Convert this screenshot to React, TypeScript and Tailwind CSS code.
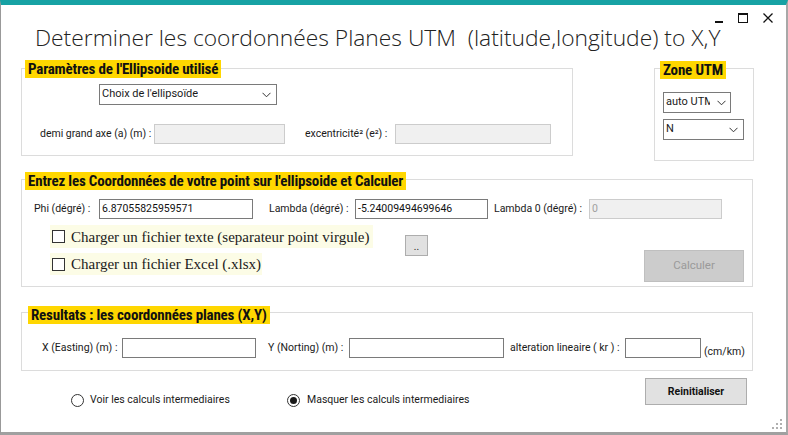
import React from "react";

const labelFont = "font-['Roboto_Condensed','Liberation_Sans',sans-serif] font-bold text-[15px] leading-[18px] tracking-[-0.18px] text-[#111]";

function GroupLabel({ text, className }: { text: string; className: string }) {
  return (
    <div className={`absolute h-[18px] bg-[#ffd700] px-[3px] whitespace-nowrap ${labelFont} ${className}`}>
      {text}
    </div>
  );
}

function Chevron() {
  return (
    <svg width="9" height="6" viewBox="0 0 9 6" className="shrink-0">
      <polyline points="0.5,0.8 4.5,4.8 8.5,0.8" fill="none" stroke="#333" strokeWidth="1" />
    </svg>
  );
}

function Combo({ text, w, textW, chevronPr = 5 }: { text: string; w: string; textW?: string; chevronPr?: number }) {
  return (
    <div className={`${w} h-[21px] shrink-0 border border-[#7a7a7a] bg-white flex items-center pl-[2px]`} style={{ paddingRight: chevronPr }}>
      <span className={`overflow-hidden whitespace-nowrap ${textW ?? ""} text-[11px]`}>{text}</span>
      <span className="flex-1" />
      <Chevron />
    </div>
  );
}

function Input({ w, value = "", disabled = false }: { w: string; value?: string; disabled?: boolean }) {
  return (
    <div
      className={`${w} h-[20px] shrink-0 border flex items-center pl-[2px] whitespace-nowrap overflow-hidden ${
        disabled ? "bg-[#f0f0f0] border-[#cccccc] text-[#a0a0a0]" : "bg-white border-[#7a7a7a] text-[#111]"
      }`}
    >
      {value}
    </div>
  );
}

function CheckRow({ text, w, h }: { text: string; w: string; h: string }) {
  return (
    <div className={`${w} ${h} bg-[#fcfce6] flex items-center pl-[2px]`}>
      <div className="w-[13px] h-[13px] border border-[#333] bg-white shrink-0" />
      <span className="ml-[6px] font-['Liberation_Serif',serif] text-[15px] leading-[18px] text-[#1a1a1a] whitespace-nowrap">
        {text}
      </span>
    </div>
  );
}

function Radio({ checked }: { checked: boolean }) {
  return (
    <div className="w-[13px] h-[13px] rounded-full border border-[#333] bg-white flex items-center justify-center shrink-0">
      {checked && <div className="w-[7px] h-[7px] rounded-full bg-[#1a1a1a]" />}
    </div>
  );
}

export default function App() {
  return (
    <div className="relative w-[788px] h-[435px] overflow-hidden bg-white border-t-[5px] border-t-[#17a2a4] border-l border-l-[#999999] border-r-2 border-r-[#a8a8a8] border-b-[3px] border-b-[#a0a0a0] font-['Roboto',sans-serif] text-[10.5px] text-[#1a1a1a]">
      {/* window controls */}
      <div className="h-[19px] flex justify-end items-start pt-[8px] pr-[13px]">
        <div className="w-[8px] h-[10px] flex items-end">
          <div className="w-[8px] h-[2px] bg-[#111]" />
        </div>
        <div className="ml-[15px] w-[10px] h-[10px] border border-[#111] border-t-2" />
        <svg className="ml-[15px]" width="10" height="10" viewBox="0 0 10 10">
          <path d="M0.5 0.5 L9.5 9.5 M9.5 0.5 L0.5 9.5" stroke="#111" strokeWidth="1.3" fill="none" />
        </svg>
      </div>

      {/* title */}
      <div className="h-[28px] pl-[34px] font-['Open_Sans',sans-serif] font-light text-[22.8px] leading-[28px] text-[#222] whitespace-pre">
        Determiner les coordonnées Planes UTM  (latitude,longitude) to X,Y
      </div>

      <div className="pl-[20px] flex flex-col">
        {/* row 1 */}
        <div className="mt-[16px] h-[93px] flex items-start">
          <div className="relative w-[552px] h-[88px] border border-[#dcdcdc] flex flex-col pt-[15px]">
            <GroupLabel text="Paramètres de l'Ellipsoide utilisé" className="-top-[9px] left-[3px]" />
            <div className="ml-[77px]">
              <Combo text="Choix de l'ellipsoïde" w="w-[178px]" />
            </div>
            <div className="mt-[19px] ml-[18px] flex items-center h-[20px]">
              <span className="w-[114px] whitespace-nowrap">demi grand axe (a) (m) :</span>
              <Input w="w-[131px]" disabled />
              <span className="ml-[20px] w-[90px] whitespace-nowrap">excentricité² (e²) :</span>
              <Input w="w-[156px]" disabled />
            </div>
          </div>

          <div className="relative ml-[81px] w-[100px] h-[93px] border border-[#dcdcdc] flex flex-col pt-[23px] pl-[8px] gap-[6px]">
            <GroupLabel text="Zone UTM" className="-top-[8px] left-[5px]" />
            <Combo text="auto UTM" w="w-[68px]" textW="w-[44px]" chevronPr={4} />
            <Combo text="N" w="w-[81px]" />
          </div>
        </div>

        {/* group 2 */}
        <div className="relative mt-[18px] w-[732px] h-[108px] border border-[#dcdcdc] flex flex-col pt-[19px]">
          <GroupLabel text="Entrez les Coordonnées de votre point sur l'ellipsoide et Calculer" className="-top-[8px] left-[3px]" />
          <div className="ml-[12px] h-[20px] flex items-center">
            <span className="w-[65px] whitespace-nowrap">Phi (dégré) :</span>
            <Input w="w-[154px]" value="6.87055825959571" />
            <span className="ml-[16px] w-[86px] whitespace-nowrap">Lambda (dégré) :</span>
            <Input w="w-[133px]" value="-5.24009494699646" />
            <span className="ml-[6px] w-[95px] whitespace-nowrap">Lambda 0 (dégré) :</span>
            <Input w="w-[133px]" value="0" disabled />
          </div>
          <div className="mt-[6px] flex items-start">
            <div className="ml-[28px] flex flex-col gap-[5px]">
              <CheckRow text="Charger un fichier texte (separateur point virgule)" w="w-[323px]" h="h-[23px]" />
              <CheckRow text="Charger un fichier Excel (.xlsx)" w="w-[212px]" h="h-[22px]" />
            </div>
            <div className="ml-[32px] mt-[10px] w-[23px] h-[21px] bg-[#e1e1e1] border border-[#adadad] flex items-end justify-center pb-[3px] leading-none text-[10px]">
              ..
            </div>
            <div className="ml-[216px] mt-[25px] w-[100px] h-[32px] bg-[#cccccc] border border-[#bfbfbf] flex items-center justify-center text-[11.5px] text-[#9a9a9a]">
              Calculer
            </div>
          </div>
        </div>

        {/* group 3 */}
        <div className="relative mt-[25px] w-[732px] h-[59px] border border-[#dcdcdc] flex flex-col pt-[25px]">
          <GroupLabel text="Resultats : les coordonnées planes (X,Y)" className="-top-[7px] left-[6px]" />
          <div className="ml-[20px] h-[20px] flex items-center">
            <span className="w-[80px] whitespace-nowrap">X (Easting) (m) :</span>
            <Input w="w-[134px]" />
            <span className="ml-[12px] w-[81px] whitespace-nowrap">Y (Norting) (m) :</span>
            <Input w="w-[155px]" />
            <span className="ml-[6px] w-[115px] whitespace-nowrap">alteration lineaire ( kr ) :</span>
            <Input w="w-[76px]" />
            <span className="ml-[3px] mt-[8px] whitespace-nowrap">(cm/km)</span>
          </div>
        </div>

        {/* bottom */}
        <div className="mt-[7px] flex items-start">
          <div className="ml-[50px] mt-[14px] h-[16px] flex items-center">
            <div className="w-[216px] flex items-center">
              <Radio checked={false} />
              <span className="ml-[6px] whitespace-nowrap">Voir les calculs intermediaires</span>
            </div>
            <Radio checked />
            <span className="ml-[7px] whitespace-nowrap">Masquer les calculs intermediaires</span>
          </div>
          <div className="ml-auto mr-[39px] w-[102px] h-[27px] bg-[#e1e1e1] border border-[#adadad] flex items-center justify-center font-bold text-[10.5px] text-[#111]">
            Reinitialiser
          </div>
        </div>
      </div>

      {/* resize grip */}
      <svg className="absolute right-[3px] bottom-[2px]" width="12" height="12" viewBox="0 0 12 12">
        <rect x="9" y="1" width="2" height="2" fill="#b0b0b0" />
        <rect x="5" y="5" width="2" height="2" fill="#b0b0b0" />
        <rect x="9" y="5" width="2" height="2" fill="#b0b0b0" />
        <rect x="1" y="9" width="2" height="2" fill="#b0b0b0" />
        <rect x="5" y="9" width="2" height="2" fill="#b0b0b0" />
        <rect x="9" y="9" width="2" height="2" fill="#b0b0b0" />
      </svg>
    </div>
  );
}
